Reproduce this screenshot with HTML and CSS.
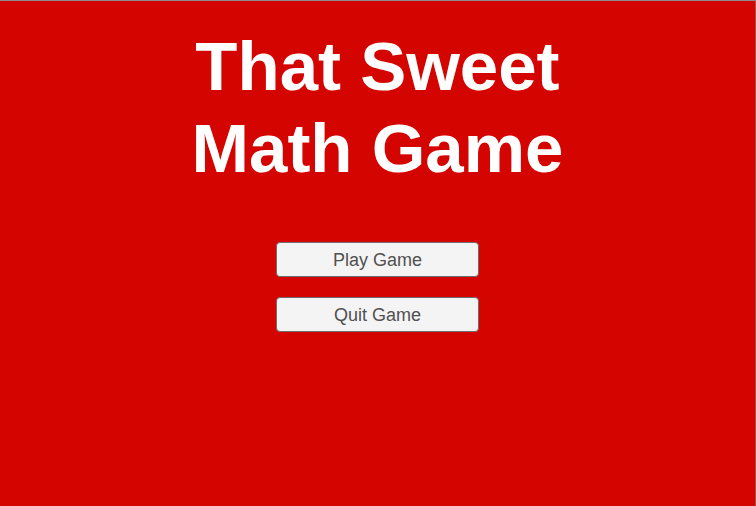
FILE: index.html
```html
<!DOCTYPE html>
<html lang="en">
<head>
<meta charset="utf-8">
<title>That Sweet Math Game</title>
<link rel="stylesheet" href="styles.css">
</head>
<body>
<main class="menu">
  <h1 class="title">That Sweet<br>Math Game</h1>
  <div class="actions">
    <button class="btn" type="button">Play Game</button>
    <button class="btn" type="button">Quit Game</button>
  </div>
</main>
</body>
</html>
```
FILE: styles.css
```css
html, body {
  margin: 0;
  height: 100%;
}

body {
  background: #d40401;
  font-family: "Liberation Sans", Arial, sans-serif;
  box-sizing: border-box;
  border-top: 1px solid #8c8c8c;
  border-right: 1px solid #a05050;
}

.menu {
  display: flex;
  flex-direction: column;
  align-items: center;
  padding-top: 25px;
}

.title {
  margin: 0;
  color: #ffffff;
  font-size: 69px;
  font-weight: bold;
  line-height: 82px;
  text-align: center;
}

.actions {
  display: flex;
  flex-direction: column;
  gap: 20px;
  margin-top: 52px;
}

.btn {
  width: 203px;
  height: 35px;
  margin: 0;
  padding: 0;
  background: #f4f4f4;
  border: 1px solid #6e6e6e;
  border-radius: 4px;
  color: #505050;
  font-family: "Liberation Sans", Arial, sans-serif;
  font-size: 18px;
  line-height: 1;
  text-align: center;
}
```
